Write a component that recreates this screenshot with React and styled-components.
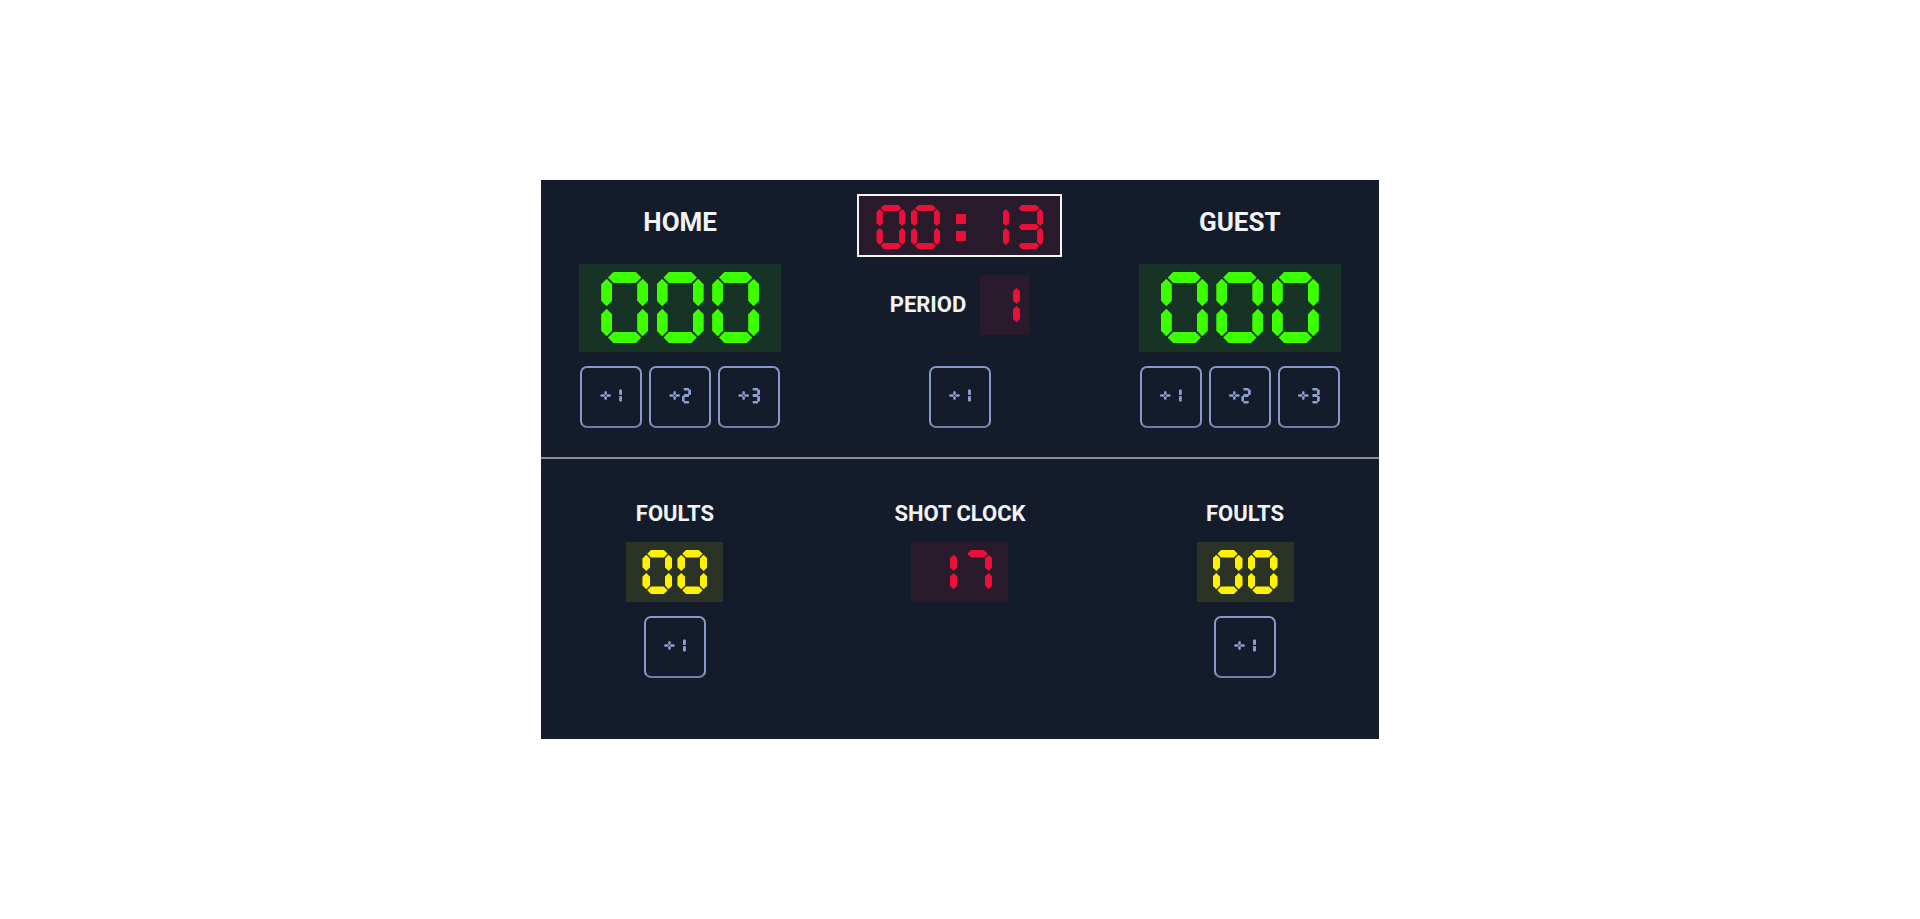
import React from "react";
import styled, { createGlobalStyle } from "styled-components";

const GlobalStyle = createGlobalStyle`
  * { box-sizing: border-box; }
  body {
    margin: 0;
    background: #ffffff;
    font-family: Roboto, "Liberation Sans", sans-serif;
  }
`;

const COLORS = {
  green: "#3cff00",
  red: "#ec1039",
  yellow: "#fff200",
  button: "#8d9dcd",
};

const TINT = {
  green: "rgba(60, 255, 0, 0.1)",
  red: "rgba(236, 16, 57, 0.1)",
  yellow: "rgba(255, 242, 0, 0.1)",
};

// lit segments per character (a top, b upper right, c lower right, d bottom,
// e lower left, f upper left, g middle)
const SEGMENTS = {
  "0": "abcdef",
  "1": "bc",
  "2": "abged",
  "3": "abgcd",
  "4": "fgbc",
  "5": "afgcd",
  "6": "afgedc",
  "7": "abc",
  "8": "abcdefg",
  "9": "abcdfg",
  "-": "g",
  " ": "",
};

// digit cell sizes for every kind of readout
// w/h cell, t stroke, g gap between segments, p point depth (share of stroke)
const SIZES = {
  score: { w: 47, h: 71, t: 11, g: 1.3, p: 0.5, gap: 8.5 },
  clock: { w: 29, h: 44, t: 6.4, g: 0.9, p: 0.5, gap: 5.5 },
  stat: { w: 30, h: 44, t: 7.6, g: 1, p: 0.5, gap: 5 },
  button: { w: 9.5, h: 16, t: 3, g: 0.3, p: 0.25, gap: 1.5 },
};

const segmentBox = (s, w, h, t, g) => {
  const half = t / 2;
  const hLen = w - t - 2 * g;
  const vLen = h / 2 - half - 2 * g;
  switch (s) {
    case "a": return { x: half + g, y: 0, w: hLen, h: t, dir: "h" };
    case "g": return { x: half + g, y: h / 2 - half, w: hLen, h: t, dir: "h" };
    case "d": return { x: half + g, y: h - t, w: hLen, h: t, dir: "h" };
    case "f": return { x: 0, y: half + g, w: t, h: vLen, dir: "v" };
    case "b": return { x: w - t, y: half + g, w: t, h: vLen, dir: "v" };
    case "e": return { x: 0, y: h / 2 + g, w: t, h: vLen, dir: "v" };
    default: return { x: w - t, y: h / 2 + g, w: t, h: vLen, dir: "v" };
  }
};

const Page = styled.main`
  min-height: 100vh;
  display: flex;
  align-items: center;
  justify-content: center;
`;

const Board = styled.section`
  width: 838px;
  background: #141c2b;
  color: #f1f3f6;
`;

const TopRow = styled.div`
  display: flex;
  justify-content: space-around;
  align-items: flex-end;
  padding: 14px 0 29px;
`;

const BottomRow = styled.div`
  display: flex;
  justify-content: space-around;
  align-items: flex-start;
  padding: 42px 0 61px;
`;

const Divider = styled.div`
  height: 2px;
  background: #8d8d8d;
`;

const Column = styled.div`
  display: flex;
  flex-direction: column;
  align-items: center;
`;

const TeamName = styled.h2`
  margin: 0 0 27px;
  font-size: 26px;
  line-height: 30px;
  font-weight: 700;
`;

const StatLabel = styled.h3`
  margin: 0 0 15px;
  font-size: 22px;
  line-height: 26px;
  font-weight: 700;
`;

const PeriodLabel = styled(StatLabel)`
  margin: 0;
`;

const Display = styled.div`
  display: flex;
  background: ${(p) => p.$tint};
  padding: ${(p) => p.$pad};
  margin-bottom: ${(p) => p.$below || 0}px;
`;

const ClockDisplay = styled(Display)`
  border: 2px solid #f4f4f4;
`;

const PeriodRow = styled.div`
  display: flex;
  align-items: center;
  gap: 14px;
  margin: 18px 0 31px;
`;

const ButtonRow = styled.div`
  display: flex;
  gap: 7px;
  margin-top: 14px;
`;

const PointButton = styled.button`
  width: 62px;
  height: 62px;
  display: flex;
  align-items: center;
  justify-content: center;
  padding: 0 0 3px;
  background: transparent;
  border: 2px solid #8898c8;
  border-bottom-color: #707ea8;
  border-radius: 7px;
  cursor: pointer;
`;

const Readout = styled.span`
  position: relative;
  display: flex;
  gap: ${(p) => p.$gap}px;
  color: ${(p) => p.$color};
`;

// the readable value, laid over the lit segments
const TextLayer = styled.span`
  position: absolute;
  inset: 0;
  display: flex;
  align-items: center;
  font-family: "Liberation Mono", monospace;
  font-size: ${(p) => p.$size}px;
  line-height: 1;
  letter-spacing: ${(p) => p.$spacing}px;
  color: transparent;
  white-space: nowrap;
`;

const Cell = styled.span`
  position: relative;
  display: block;
  flex-shrink: 0;
  width: ${(p) => p.$w}px;
  height: ${(p) => p.$h}px;
`;

const Segment = styled.span`
  position: absolute;
  left: ${(p) => p.$x}px;
  top: ${(p) => p.$y}px;
  width: ${(p) => p.$w}px;
  height: ${(p) => p.$h}px;
  background: currentColor;
  clip-path: ${(p) =>
    p.$dir === "h"
      ? `polygon(${p.$p}px 0, calc(100% - ${p.$p}px) 0, 100% 50%, calc(100% - ${p.$p}px) 100%, ${p.$p}px 100%, 0 50%)`
      : `polygon(50% 0, 100% ${p.$p}px, 100% calc(100% - ${p.$p}px), 50% 100%, 0 calc(100% - ${p.$p}px), 0 ${p.$p}px)`};
`;

const Dot = styled.span`
  position: absolute;
  left: ${(p) => p.$x}px;
  top: ${(p) => p.$y}px;
  width: ${(p) => p.$s}px;
  height: ${(p) => p.$s}px;
  background: currentColor;
`;

const Seg = ({ box, point }) => (
  <Segment $x={box.x} $y={box.y} $w={box.w} $h={box.h} $dir={box.dir} $p={point} />
);

const Digit = ({ ch, size }) => {
  const { w, h, t, g, p } = size;
  return (
    <Cell $w={w} $h={h}>
      {(SEGMENTS[ch] || "").split("").map((s) => (
        <Seg key={s} box={segmentBox(s, w, h, t, g)} point={t * p} />
      ))}
    </Cell>
  );
};

const Colon = ({ size }) => {
  const { w, h } = size;
  const s = w * 0.35;
  const x = (w - s) / 2 + 1;
  return (
    <Cell $w={w} $h={h}>
      <Dot $x={x} $y={h / 2 - 13} $s={s} />
      <Dot $x={x} $y={h / 2 + 4} $s={s} />
    </Cell>
  );
};

const Plus = ({ size }) => {
  const { w, h, t } = size;
  const pw = w * 1.16;
  const g = 0.5;
  const th = t * 0.85;
  const cx = pw / 2;
  const cy = h / 2;
  const arm = 4.6;
  const boxes = [
    { x: 0, y: cy - th / 2, w: cx - g, h: th, dir: "h" },
    { x: cx + g, y: cy - th / 2, w: cx - g, h: th, dir: "h" },
    { x: cx - th / 2, y: cy - arm, w: th, h: arm - g, dir: "v" },
    { x: cx - th / 2, y: cy + g, w: th, h: arm - g, dir: "v" },
  ];
  return (
    <Cell $w={pw} $h={h}>
      {boxes.map((b, i) => (
        <Seg key={i} box={b} point={th / 3} />
      ))}
    </Cell>
  );
};

const SegmentText = ({ text, size, color }) => {
  const fontSize = Math.round(size.h * 0.9);
  const spacing = size.w + size.gap - fontSize * 0.6;
  return (
    <Readout $gap={size.gap} $color={color}>
      {text.split("").map((ch, i) => {
        if (ch === ":") return <Colon key={i} size={size} />;
        if (ch === "+") return <Plus key={i} size={size} />;
        return <Digit key={i} ch={ch} size={size} />;
      })}
      <TextLayer $size={fontSize} $spacing={spacing}>
        {text}
      </TextLayer>
    </Readout>
  );
};

const AddButton = ({ points }) => (
  <PointButton type="button">
    <SegmentText text={`+${points}`} size={SIZES.button} color={COLORS.button} />
  </PointButton>
);

const Team = ({ name, score }) => (
  <Column>
    <TeamName>{name}</TeamName>
    <Display $tint={TINT.green} $pad="8px 22px 9px">
      <SegmentText text={score} size={SIZES.score} color={COLORS.green} />
    </Display>
    <ButtonRow>
      {[1, 2, 3].map((n) => (
        <AddButton key={n} points={n} />
      ))}
    </ButtonRow>
  </Column>
);

const Fouls = ({ value }) => (
  <Column>
    <StatLabel>FOULTS</StatLabel>
    <Display $tint={TINT.yellow} $pad="8px 16px" $below={14}>
      <SegmentText text={value} size={SIZES.stat} color={COLORS.yellow} />
    </Display>
    <AddButton points={1} />
  </Column>
);

export default function App() {
  return (
    <>
      <GlobalStyle />
      <Page>
        <Board>
          <TopRow>
            <Team name="HOME" score="000" />
            <Column>
              <ClockDisplay $tint={TINT.red} $pad="9px 17px 6px">
                <SegmentText text="00:13" size={SIZES.clock} color={COLORS.red} />
              </ClockDisplay>
              <PeriodRow>
                <PeriodLabel as="span">PERIOD</PeriodLabel>
                <Display $tint={TINT.red} $pad="8px 10px">
                  <SegmentText text="1" size={SIZES.stat} color={COLORS.red} />
                </Display>
              </PeriodRow>
              <AddButton points={1} />
            </Column>
            <Team name="GUEST" score="000" />
          </TopRow>
          <Divider />
          <BottomRow>
            <Fouls value="00" />
            <Column>
              <StatLabel>SHOT CLOCK</StatLabel>
              <Display $tint={TINT.red} $pad="8px 16px">
                <SegmentText text="17" size={SIZES.stat} color={COLORS.red} />
              </Display>
            </Column>
            <Fouls value="00" />
          </BottomRow>
        </Board>
      </Page>
    </>
  );
}
